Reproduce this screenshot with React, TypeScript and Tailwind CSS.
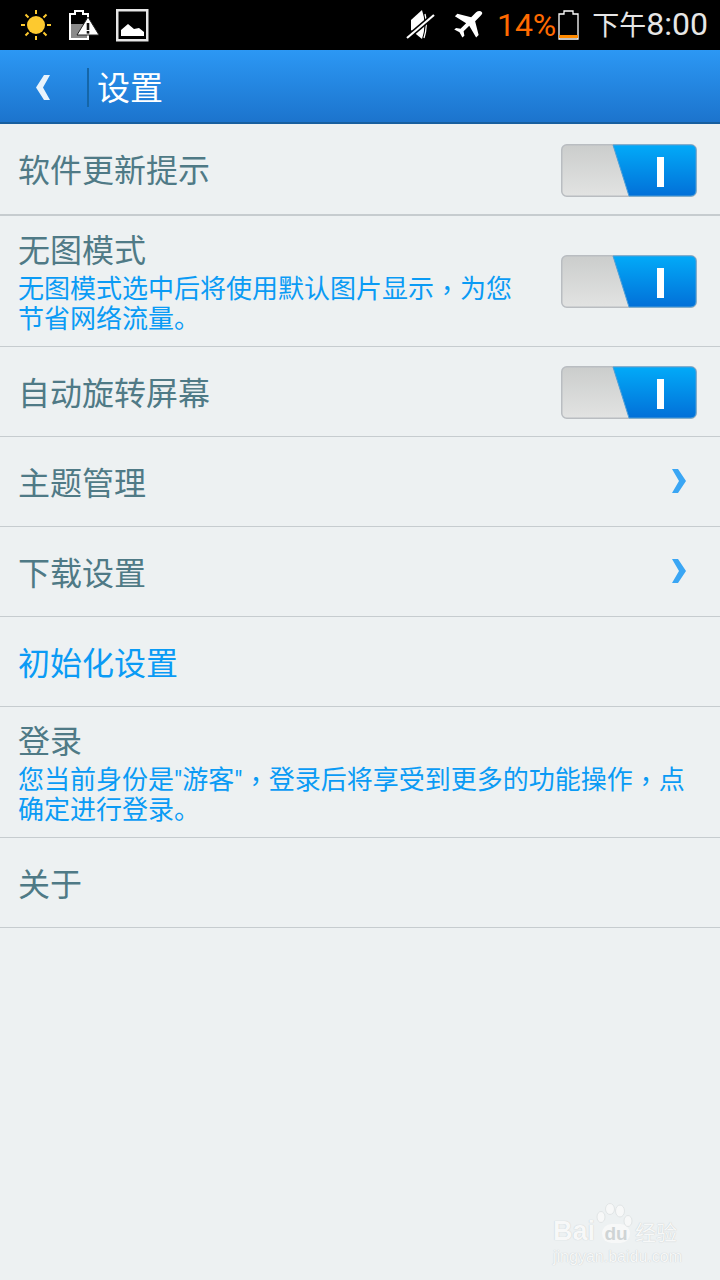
import type { ReactNode } from "react";

const cjk = "font-['Roboto','Noto_Sans_CJK_SC',sans-serif]";

// first line of a hint: the comma sits in the middle of its cell in the reference, as in the TC font
function CommaLine({ parts }: { parts: string[] }) {
  return (
    <div className="flex whitespace-nowrap">
      {parts.map((part, i) => (
        <div key={i} className="flex">
          {i > 0 && <div className="font-['Noto_Sans_CJK_TC']">，</div>}
          <div>{part}</div>
        </div>
      ))}
    </div>
  );
}

function Toggle({ nudge }: { nudge?: boolean }) {
  return (
    <svg width="136" height="53" viewBox="0 0 136 53" className={`shrink-0 ${nudge ? "mt-[2px]" : ""}`}>
      <defs>
        <linearGradient id="off" x1="0" y1="0" x2="0" y2="1">
          <stop offset="0" stopColor="#cbcdcc" />
          <stop offset="1" stopColor="#e2e3e2" />
        </linearGradient>
        <linearGradient id="on" x1="0" y1="0" x2="0" y2="1">
          <stop offset="0" stopColor="#02aaf8" />
          <stop offset="1" stopColor="#0270d8" />
        </linearGradient>
      </defs>
      <rect x="0.75" y="0.75" width="134.5" height="51.5" rx="5" fill="url(#off)" stroke="#b9bdc1" strokeWidth="1.5" />
      <path d="M52 1H130a5 5 0 0 1 5 5V47a5 5 0 0 1-5 5H68Z" fill="url(#on)" stroke="#4d9fd8" strokeWidth="1" />
      <rect x="96" y="13" width="7" height="30" fill="#fff" />
    </svg>
  );
}

function Chevron() {
  return (
    <svg width="14" height="24" viewBox="0 0 14 24" className="mb-[1px] shrink-0">
      <path d="M0 0H6L14 12L6 24H0L7 12Z" fill="#3aa6f4" />
    </svg>
  );
}

function Row({ title, sub, blue, right, h, thick }: { title: string; sub?: ReactNode; blue?: boolean; right?: ReactNode; h: string; thick?: boolean }) {
  return (
    <div className={`flex shrink-0 items-center justify-between border-[#c6cccf] pl-[18px] ${thick ? "border-b-2" : "border-b"} ${h}`}>
      <div className={sub ? "pt-[3px]" : "mt-[4px]"}>
        <div className={`text-[32px] leading-[38px] ${blue ? "text-[#0a9bf5]" : "text-[#4f7a86]"}`}>{title}</div>
        {sub && <div className="mt-[4px] text-[26px] leading-[30px] text-[#0a9bf5]">{sub}</div>}
      </div>
      {right}
    </div>
  );
}

export default function App() {
  return (
    <div className={`flex h-[1280px] w-[720px] flex-col overflow-hidden bg-[#edf1f2] ${cjk}`}>
      <div className="flex h-[50px] shrink-0 items-center justify-between bg-black pl-[20px] pr-[12px]">
        <div className="flex items-center gap-[17px]">
          <svg width="32" height="32" viewBox="0 0 32 32">
            <circle cx="16" cy="16" r="9" fill="#fdc92f" />
            <g stroke="#fdc92f" strokeWidth="2">
              <path d="M16 1V5M16 27V31M1 16H5M27 16H31M5.500 5.500L8.500 8.500M23.500 23.500L26.500 26.500M5.500 26.500L8.500 23.500M23.500 8.500L26.500 5.500" />
            </g>
          </svg>
          <svg width="30" height="32" viewBox="0 0 30 32">
            <path d="M1 5H6V2H14V5H19V30H1Z" fill="#000" stroke="#fff" strokeWidth="2" />
            <rect x="2" y="15" width="16" height="14" fill="#8a8a8a" />
            <path d="M19 8L30 26H8Z" fill="#fff" stroke="#222" strokeWidth="1" />
            <rect x="17.700" y="14" width="2.600" height="7" fill="#111" />
            <rect x="17.700" y="22" width="2.600" height="2.600" fill="#111" />
          </svg>
          <svg width="33" height="33" viewBox="0 0 33 33">
            <rect x="1.250" y="1.250" width="30" height="30" fill="#000" stroke="#e6e6e6" strokeWidth="2.500" />
            <path d="M5 27V21L12 15L18 20L23 19L28 23V27Z" fill="#fff" />
          </svg>
        </div>
        <div className="flex items-center">
          <svg width="30" height="32" viewBox="0 0 30 32">
            <path d="M5 11L16 1Q21 15 16 30L5 21Z" fill="#fff" />
            <path d="M19 5Q22 16 18 29" fill="none" stroke="#fff" strokeWidth="1.300" />
            <path d="M1 29L28 6" stroke="#000" strokeWidth="5" />
            <path d="M1 29L28 6" stroke="#fff" strokeWidth="2.200" />
          </svg>
          <svg width="30" height="30" viewBox="0 0 24 24" className="ml-[17px]">
            <path d="M23 1.500c-1-1-3-1-4.500.3L14.500 5.800 3.500 3 1.500 5l9 5.500-4.500 4.500-3.500-.6L1 15.500l4.200 2.300 2.300 4.200 1.600-1.500-.6-3.500 4.500-4.500L18.500 22l2-2-2.800-11 4-4c1.300-1.500 2.300-2.500 1.300-3.500Z" fill="#fff" />
          </svg>
          <span className="ml-[14px] font-['Roboto'] text-[32px] leading-[50px] text-[#ff6a00]">14%</span>
          <svg width="21" height="30" viewBox="0 0 21 30" className="ml-[2px]">
            <path d="M1 4H6V1H15V4H20V29H1Z" fill="#000" stroke="#fff" strokeWidth="1.300" />
            <rect x="1" y="25" width="19" height="3" fill="#ff8a00" />
          </svg>
          <span className="ml-[13px] flex items-baseline leading-[50px] text-[#e6e6e6]">
            <span className="text-[27px]">下午</span>
            <span className="text-[32px]">8:00</span>
          </span>
        </div>
      </div>

      <div className="flex h-[74px] shrink-0 items-center border-b-2 border-[#175f9f] bg-gradient-to-b from-[#2c98f4] to-[#1c74cd]">
        <svg width="14" height="25" viewBox="0 0 14 25" className="ml-[36px] mt-[2px]">
          <path d="M8 0H14L7 12.500L14 25H8L0 12.500Z" fill="#e8f3fc" />
        </svg>
        <div className="ml-[37px] mt-[2px] h-[39px] w-[2px] bg-[#1566a8]" />
        <div className="ml-[8px] mt-[6px] text-[33px] leading-[40px] text-white">设置</div>
      </div>

      <div className="flex flex-col">
        <Row thick h="h-[92px] pr-[23px]" title="软件更新提示" right={<Toggle nudge />} />
        <Row
          h="h-[131px] pr-[23px]"
          title="无图模式"
          sub={
            <>
              <CommaLine parts={["无图模式选中后将使用默认图片显示", "为您"]} />
              <div>节省网络流量。</div>
            </>
          }
          right={<Toggle />}
        />
        <Row h="h-[90px] pr-[23px]" title="自动旋转屏幕" right={<Toggle nudge />} />
        <Row h="h-[90px] pr-[34px]" title="主题管理" right={<Chevron />} />
        <Row h="h-[90px] pr-[34px]" title="下载设置" right={<Chevron />} />
        <Row h="h-[90px]" title="初始化设置" blue />
        <Row
          h="h-[131px] pr-[30px]"
          title="登录"
          sub={
            <>
              <CommaLine parts={['您当前身份是"游客"', "登录后将享受到更多的功能操作", "点"]} />
              <div>确定进行登录。</div>
            </>
          }
        />
        <Row h="h-[90px]" title="关于" />
      </div>

      <div className="mt-auto mb-[15px] mr-[40px] flex w-[127px] flex-col self-end">
        <div className="relative flex h-[40px] items-end font-['Liberation_Sans'] text-[#f7f8f8] [text-shadow:0_0_1px_#b9bfc2]">
          <span className="w-[49px] text-[27px] font-bold leading-[24px]">Bai</span>
          <span className="w-[28px] rounded-[10px] bg-[#f7f8f8] text-center text-[19px] font-bold leading-[19px] text-[#cfd4d5] [text-shadow:none]">du</span>
          <span className="ml-[5px] text-[21px] leading-[24px] font-['Noto_Sans_CJK_SC']">经验</span>
          <svg width="38" height="26" viewBox="0 0 38 26" className="absolute left-[43px] top-0">
            <g fill="#f7f8f8" stroke="#e1e5e6">
              <ellipse cx="5" cy="14" rx="4" ry="5.500" />
              <ellipse cx="14" cy="6" rx="4.500" ry="5.500" />
              <ellipse cx="24" cy="8" rx="4.500" ry="6" />
              <ellipse cx="32" cy="18" rx="4" ry="5.500" />
            </g>
          </svg>
        </div>
        <div className="mt-[6px] whitespace-nowrap font-['Liberation_Sans'] text-[16px] leading-[16px] text-[#f7f8f8] [text-shadow:0_0_1px_#b9bfc2]">jingyan.baidu.com</div>
      </div>
    </div>
  );
}
